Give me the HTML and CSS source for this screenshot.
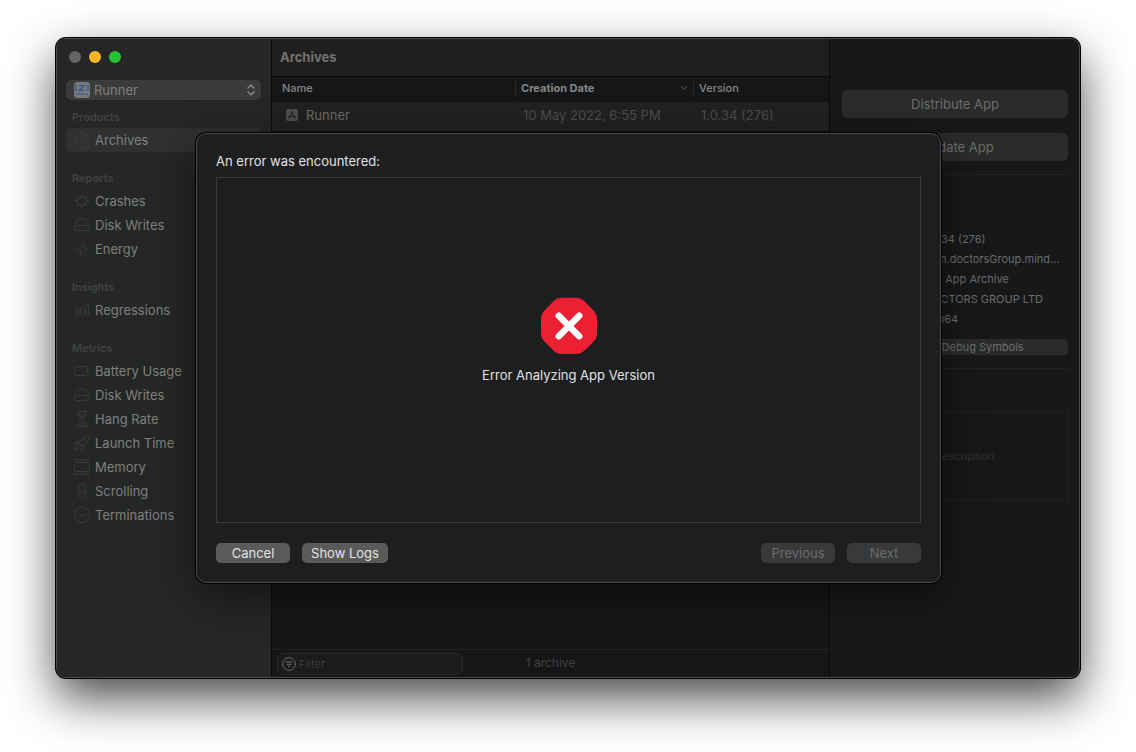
FILE: index.html
```html
<!DOCTYPE html>
<html lang="en">
<head>
    <meta charset="UTF-8">
    <meta name="viewport" content="width=device-width, initial-scale=1.0">
    <title>Archives</title>
    <link rel="stylesheet" href="styles.css">
</head>
<body>
    <div class="window">
        <aside class="sidebar">
            <div class="traffic-lights">
                <span class="light"></span>
                <span class="light yellow"></span>
                <span class="light green"></span>
            </div>

            <div class="app-select">
                <svg class="app-icon" width="16" height="16" viewBox="0 0 16 16">
                    <rect width="16" height="16" rx="3.5" fill="#777a7d"/>
                    <path d="M1.8 3v6M4.8 3.6h5.6L5.2 8.4h5.4M14 3v6" fill="none" stroke="#3c5488" stroke-width="1.3"/>
                    <path d="M2 12h12" stroke="#4b6391" stroke-width="2" stroke-dasharray="1.4 .7"/>
                </svg>
                <select aria-label="App">
                    <option>Runner</option>
                </select>
                <svg class="chevrons" width="10" height="12" viewBox="0 0 10 12">
                    <path d="M1.5 4.5L5 1.2l3.5 3.3M1.5 7.5L5 10.8l3.5-3.3"/>
                </svg>
            </div>

            <nav>
                <h2>Products</h2>
                <a href="#" class="item active">
                    <svg viewBox="0 0 16 16"><path d="M2.5.5h8l3.500 3.500v10.500a1 1 0 0 1-1 1h-10.500a1 1 0 0 1-1-1v-13a1 1 0 0 1 1-1zM10.500.5v3.500h3.500M7 4.500l3.500 8M8 4.500l-3.500 8M3.500 10h8"/></svg>
                    Archives
                </a>

                <h2>Reports</h2>
                <a href="#" class="item">
                    <svg viewBox="0 0 16 16"><path d="M8 1.200l1.300 3.700 3.500-1.700-1.700 3.500 3.700 1.300-3.700 1.300 1.700 3.500-3.500-1.700L8 14.800l-1.300-3.700-3.500 1.700 1.700-3.500L1.200 8l3.700-1.300-1.700-3.500 3.500 1.700z"/></svg>
                    Crashes
                </a>
                <a href="#" class="item">
                    <svg viewBox="0 0 16 16"><path d="M.5 10.500L3 3.200q.3-1 1.400-1h7.200q1.100 0 1.400 1l2.500 7.300M2 8.500h12q1.500 0 1.500 1.500v2q0 1.700-1.500 1.700H2Q.5 13.700.5 12v-2Q.5 8.500 2 8.500zM12 11.200h1.500"/></svg>
                    Disk Writes
                </a>
                <a href="#" class="item">
                    <svg viewBox="0 0 16 16"><path d="M10.500 1L2.500 9h4.700l-1.700 6.500L13.500 7H8.700z"/></svg>
                    Energy
                </a>

                <h2>Insights</h2>
                <a href="#" class="item">
                    <svg viewBox="0 0 16 16"><rect x="1.500" y="6.500" width="3" height="7" rx="1"/><rect x="6.500" y="4.500" width="3" height="9" rx="1"/><rect x="11.500" y="2.500" width="3" height="11" rx="1"/></svg>
                    Regressions
                </a>

                <h2>Metrics</h2>
                <a href="#" class="item">
                    <svg viewBox="0 0 16 16"><rect x=".5" y="3.500" width="13" height="9" rx="2"/><path d="M15.500 6.500v3"/></svg>
                    Battery Usage
                </a>
                <a href="#" class="item">
                    <svg viewBox="0 0 16 16"><path d="M.5 10.500L3 3.200q.3-1 1.400-1h7.200q1.100 0 1.400 1l2.500 7.300M2 8.500h12q1.500 0 1.500 1.500v2q0 1.700-1.500 1.700H2Q.5 13.700.5 12v-2Q.5 8.500 2 8.500zM12 11.200h1.500"/></svg>
                    Disk Writes
                </a>
                <a href="#" class="item">
                    <svg viewBox="0 0 16 16"><path d="M2.500.5h11M2.500 15.500h11M4 .5v2.500q0 2 2 3.500 1.300 1 1.300 1.500T6 9.500q-2 1.500-2 3.500v2.500M12 .5v2.500q0 2-2 3.500Q8.700 7.500 8.700 8T10 9.500q2 1.500 2 3.500v2.500M5 4h6L8 7zM5 14l3-3 3 3z"/></svg>
                    Hang Rate
                </a>
                <a href="#" class="item">
                    <svg viewBox="0 0 16 16"><path d="M5 8.500Q8 1.500 15.300.7 14.700 8 7.500 11zM5 8.500L7.500 11M6 6L3 6.200.7 9.200 5 8.500M10 10l-.2 3-3 2.300.7-4.300M3.500 10.500Q1 11 1 15q4 0 4.500-2.500"/><circle cx="10.800" cy="5.200" r="1.300"/></svg>
                    Launch Time
                </a>
                <a href="#" class="item">
                    <svg viewBox="0 0 16 16"><rect x=".5" y="3.500" width="15" height="9" rx="1"/><path d="M1 1h14M1 15h14" stroke-width="2" stroke-dasharray="1.500 1"/></svg>
                    Memory
                </a>
                <a href="#" class="item">
                    <svg viewBox="0 0 16 16"><path d="M4.500 7V4a3.500 3.500 0 0 1 7 0v3.500q0 1-1 1L8 6 5.500 8.500q-1 0-1-1.500zM11.500 10v2a3.500 3.500 0 0 1-7 0v-1.500L6 9l2 2 2-2 1.500-.5z"/></svg>
                    Scrolling
                </a>
                <a href="#" class="item">
                    <svg viewBox="0 0 16 16"><circle cx="8" cy="8" r="7.500"/><path d="M4.500 8h7"/></svg>
                    Terminations
                </a>
            </nav>
        </aside>

        <main class="content">
            <h1>Archives</h1>
            <table>
                <thead>
                    <tr>
                        <th class="col-name"><div class="cell">Name</div></th>
                        <th class="col-date">
                            <div class="cell sorted">
                                Creation Date
                                <svg width="8" height="6" viewBox="0 0 8 6"><path d="M1 1l3 3.500L7 1"/></svg>
                            </div>
                        </th>
                        <th><div class="cell">Version</div></th>
                    </tr>
                </thead>
                <tbody>
                    <tr>
                        <td>
                            <div class="archive-name">
                                <svg width="12" height="12" viewBox="0 0 12 12">
                                    <rect width="12" height="12" rx="2" fill="#4c4c4c"/>
                                    <path d="M5.600 2.500L9 9.500M6.400 2.500L3 9.500M2 7.500h8" fill="none" stroke="#222"/>
                                </svg>
                                Runner
                            </div>
                        </td>
                        <td class="dim">10 May 2022, 6:55 PM</td>
                        <td class="dim">1.0.34 (276)</td>
                    </tr>
                </tbody>
            </table>
            <footer>
                <label class="filter">
                    <svg width="14" height="14" viewBox="0 0 14 14"><circle cx="7" cy="7" r="6.300"/><path d="M3.500 5h7M4.700 7.300h4.600M6 9.500h2"/></svg>
                    <input type="text" placeholder="Filter" aria-label="Filter">
                </label>
                <span>1 archive</span>
            </footer>
        </main>

        <aside class="inspector">
            <button class="action">Distribute App</button>
            <button class="action">Validate App</button>
            <section>
                <h3>Details</h3>
                <dl>
                    <dt>Version</dt>
                    <dd>1.0.34 (276)</dd>
                    <dt>Identifier</dt>
                    <dd>com.doctorsGroup.mind...</dd>
                    <dt>Type</dt>
                    <dd>iOS App Archive</dd>
                    <dt>Team</dt>
                    <dd>DOCTORS GROUP LTD</dd>
                    <dt>Arch</dt>
                    <dd>arm64</dd>
                </dl>
                <button class="symbols">Download Debug Symbols</button>
            </section>
            <section>
                <h3>Description</h3>
                <div class="description">No Description</div>
            </section>
        </aside>

        <div class="overlay">
            <div class="dialog" role="dialog" aria-labelledby="dialog-title">
                <h2 id="dialog-title">An error was encountered:</h2>
                <div class="message">
                    <svg width="58" height="58" viewBox="0 0 58 58">
                        <path d="M21 .8h16q4 0 7 3L54 14q3 3 3 7v16q0 4-3 7L44 54q-3 3-7 3H21q-4 0-7-3L4 44q-3-3-3-7V21q0-4 3-7L14 3.800q3-3 7-3z" fill="#eb2033"/>
                        <path d="M18.800 18.800l20.400 20.400M39.200 18.800L18.800 39.200" stroke="#fff" stroke-width="6.500" stroke-linecap="round"/>
                    </svg>
                    <p>Error Analyzing App Version</p>
                </div>
                <div class="buttons">
                    <button>Cancel</button>
                    <button class="wide">Show Logs</button>
                    <button class="push" disabled>Previous</button>
                    <button disabled>Next</button>
                </div>
            </div>
        </div>
    </div>
</body>
</html>
```
FILE: styles.css
```css
* {
    box-sizing: border-box;
}

body {
    display: grid;
    min-height: 100vh;
    margin: 0;
    padding: 38px 56px 74px;
    background: #fff;
    font-family: Inter, "Liberation Sans", sans-serif;
    font-size: 13px;
    line-height: 16px;
}

h1, h2, h3, p, dl, dd {
    margin: 0;
}

button, input, select {
    font: inherit;
    color: inherit;
    border: none;
}

.window {
    position: relative;
    display: grid;
    grid-template-columns: 215px 1fr 250px;
    overflow: hidden;
    border: 1px solid #4b4c4c;
    border-radius: 10px;
    background: #17181a;
    box-shadow: 0 0 0 1px #000, 0 20px 48px rgba(0, 0, 0, 0.72);
}

/* Sidebar */
.sidebar {
    padding: 12px 10px 12px 9px;
    border-right: 1px solid #0b0b0b;
    background: #252726;
    color: #7e807f;
}

.traffic-lights {
    display: flex;
    gap: 8px;
    padding-left: 3px;
    margin-bottom: 17px;
}

.light {
    width: 12px;
    height: 12px;
    border-radius: 50%;
    background: #636565;
}

.light.yellow {
    background: #feb429;
}

.light.green {
    background: #27c138;
}

.app-select {
    display: grid;
    align-items: center;
    margin-bottom: 10px;
}

.app-select > * {
    grid-area: 1 / 1;
}

.app-select select {
    appearance: none;
    width: 100%;
    height: 20px;
    padding: 0 24px 1px 28px;
    border-radius: 5px;
    background: #3a3b3b;
}

.app-icon {
    z-index: 1;
    margin-left: 8px;
}

.chevrons {
    z-index: 1;
    justify-self: end;
    margin-right: 5px;
    fill: none;
    stroke: #858686;
    stroke-width: 1.5;
}

.sidebar h2 {
    margin: 19px 0 4px 6px;
    color: #414342;
    font-size: 11px;
    font-weight: 600;
    line-height: 14px;
}

.sidebar h2:first-child {
    margin-top: 0;
}

.item {
    display: flex;
    align-items: center;
    gap: 5px;
    height: 24px;
    padding-left: 8px;
    border-radius: 5px;
    color: inherit;
    text-decoration: none;
}

.item.active {
    background: #2f3130;
}

.item svg {
    width: 16px;
    height: 16px;
    fill: none;
    stroke: #393b3a;
}

/* Archive list */
.content {
    display: flex;
    flex-direction: column;
    min-width: 0;
    background: #151618;
}

.content h1 {
    padding: 10px 8px 11px;
    border-bottom: 1px solid #0a0a0a;
    background: #1f1f1f;
    color: #727272;
    font-size: 13px;
    font-weight: 700;
}

table {
    width: 100%;
    border-collapse: collapse;
    table-layout: fixed;
}

th {
    height: 25px;
    padding: 4px 0 5px;
    color: #858686;
    font-size: 11px;
    font-weight: 500;
    line-height: 14px;
    text-align: left;
}

.col-name {
    width: 243px;
}

.col-date {
    width: 178px;
}

.cell {
    height: 16px;
    padding-left: 5px;
    border-left: 1px solid #2a2b2c;
}

.col-name .cell {
    padding-left: 10px;
    border: none;
}

.cell.sorted {
    display: flex;
    align-items: center;
    justify-content: space-between;
    padding-right: 5px;
    padding-bottom: 2px;
    font-weight: 700;
}

.cell svg {
    fill: none;
    stroke: #555656;
}

td {
    height: 27px;
    padding: 0 0 0 8px;
    border-bottom: 1px solid #2a2a2a;
    background: #212121;
    color: #6b6b6b;
}

td.dim {
    color: #4c4c4c;
}

.archive-name {
    display: flex;
    align-items: center;
    gap: 8px;
    padding-left: 6px;
}

footer {
    display: grid;
    grid-template-columns: 1fr auto 1fr;
    align-items: center;
    margin-top: auto;
    padding: 3px 5px 2px;
    border-top: 1px solid #202122;
    color: #404142;
    font-size: 12px;
}

footer span {
    padding-bottom: 2px;
}

.filter {
    display: flex;
    align-items: center;
    gap: 3px;
    width: 186px;
    height: 22px;
    padding: 0 4px;
    border: 1px solid #282929;
    border-radius: 6px;
    background: #1b1b1b;
}

.filter svg {
    flex: none;
    fill: none;
    stroke: #6c6c6c;
}

.filter input {
    width: 100%;
    padding: 0;
    background: none;
    font-size: 11px;
    outline: none;
}

.filter input::placeholder {
    color: #3a3a3a;
}

/* Inspector */
.inspector {
    padding: 51px 11px 12px 12px;
    border-left: 1px solid #0a0a0a;
    color: #6c6d6d;
    font-size: 11px;
}

.inspector button {
    display: block;
    width: 100%;
    padding: 0 0 1px;
    background: #2a2c2b;
    text-align: center;
}

.inspector .action {
    height: 28px;
    margin-bottom: 15px;
    border-radius: 6px;
    font-size: 13px;
}

.inspector section {
    margin-top: 13px;
    padding-top: 14px;
    border-top: 1px solid #222324;
}

.inspector .action + section {
    margin-top: -2px;
}

.inspector h3 {
    margin-bottom: 12px;
    font-size: 11px;
    font-weight: 600;
}

dl {
    display: grid;
    grid-template-columns: 74px 1fr;
    gap: 0 8px;
    padding-top: 12px;
    line-height: 20px;
}

dt {
    text-align: right;
}

dd {
    white-space: nowrap;
}

.inspector .symbols {
    height: 16px;
    margin-top: 10px;
    border-radius: 4px;
    line-height: 14px;
}

.description {
    display: flex;
    align-items: center;
    justify-content: center;
    height: 90px;
    border: 1px solid #202120;
    background: #171716;
    color: #303030;
    font-weight: 500;
}

/* Error dialog */
.overlay {
    position: absolute;
    inset: 0;
    display: flex;
    padding: 94px 138px 94px 139px;
}

.dialog {
    flex: 1;
    display: flex;
    flex-direction: column;
    padding: 19px;
    border: 1px solid #4a4b4c;
    border-radius: 10px;
    background: #1d1e20;
    box-shadow: 0 0 0 1px #000, 0 12px 40px rgba(0, 0, 0, 0.5);
    color: #e2e2e2;
}

.dialog h2 {
    margin-bottom: 8px;
    font-size: 13px;
    font-weight: 400;
}

.message {
    flex: 1;
    display: flex;
    flex-direction: column;
    align-items: center;
    justify-content: center;
    gap: 12px;
    padding-bottom: 20px;
    border: 1px solid #3b3c3d;
}

.buttons {
    display: flex;
    gap: 12px;
    margin-top: 20px;
}

.buttons button {
    width: 74px;
    height: 20px;
    padding: 0 0 1px;
    border-radius: 5px;
    background: #5a5a5a;
}

.buttons .wide {
    width: 86px;
}

.buttons .push {
    margin-left: auto;
}

.buttons button:disabled {
    background: #38393a;
    color: #6b6c6c;
}
```
